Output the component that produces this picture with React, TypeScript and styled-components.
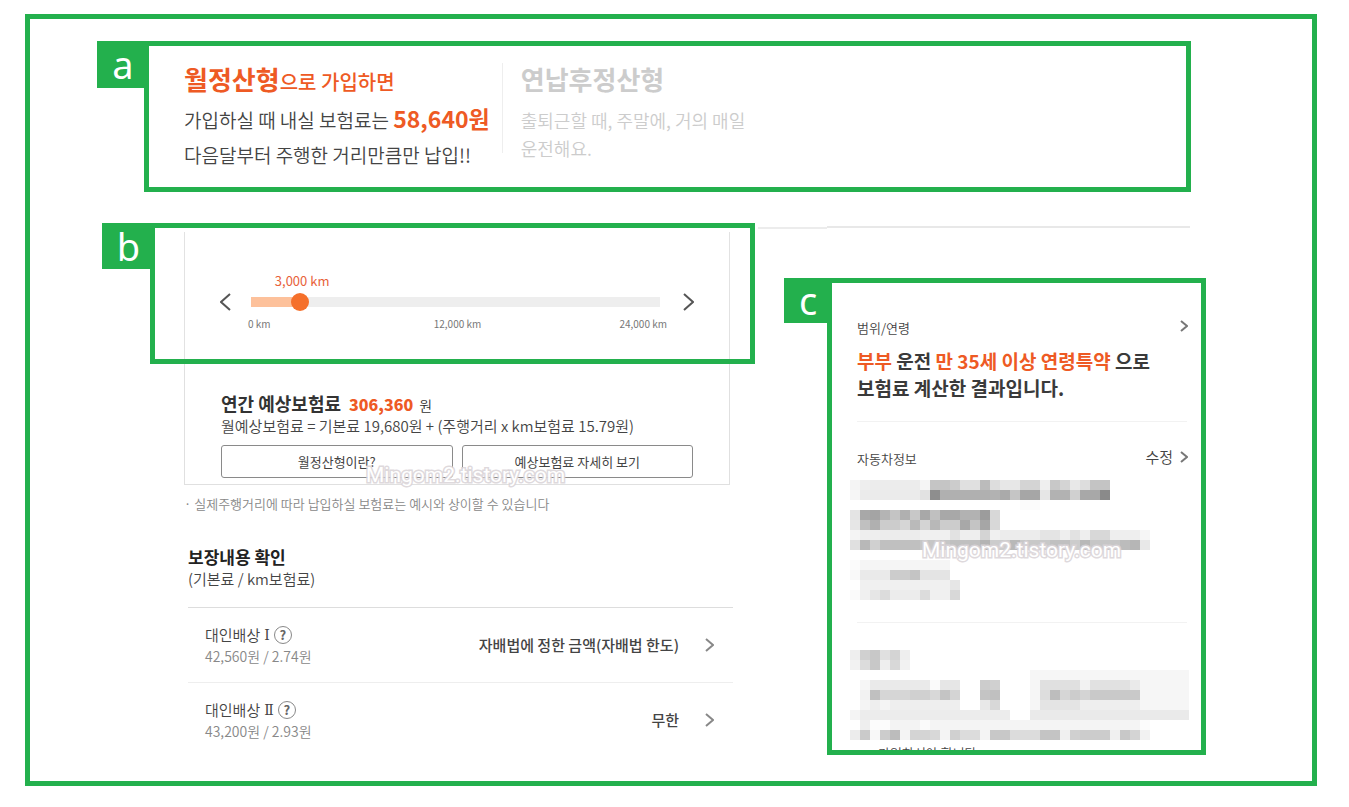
import React, { useState } from 'react';
import styled, { createGlobalStyle } from 'styled-components';

const GREEN = '#23b04d';
const ORANGE = '#ee5a24';

const GlobalStyle = createGlobalStyle`
  *, *::before, *::after { box-sizing: border-box; }
  body {
    margin: 0;
    background: #fff;
    color: #444;
    font-family: "Noto Sans CJK KR", "Noto Sans", sans-serif;
  }
  h2, h3, p, ul { margin: 0; padding: 0; }
  button { font-family: inherit; color: inherit; cursor: pointer; }
`;

const Page = styled.main`
  padding: 14px 32px 21px 25px;
`;

const Frame = styled.div`
  border: 5px solid ${GREEN};
  padding: 22px 0 25px;
`;

const Callout = styled.section`
  display: flex;
  align-items: flex-start;
`;

const Tag = styled.span<{ $width: number; $height: number }>`
  flex: none;
  width: ${p => p.$width}px;
  height: ${p => p.$height}px;
  margin-right: -5px;
  background: ${GREEN};
  color: #fff;
  font: 400 38px/${p => p.$height}px "Noto Sans", sans-serif;
  text-align: center;
`;

const Box = styled.div`
  flex: 1;
  min-width: 0;
  border: 5px solid ${GREEN};
`;

/* plan comparison */

const PlanCallout = styled(Callout)`
  margin: 0 121px 31px 67px;
`;

const Plans = styled(Box)`
  display: flex;
  padding: 15px 0 17px 35px;
`;

const Plan = styled.div`
  flex: none;
  min-width: 304px;
  white-space: nowrap;
`;

const PlanTitle = styled.h2<{ $muted?: boolean }>`
  font-size: 26px;
  font-weight: 700;
  line-height: 36px;
  color: ${p => (p.$muted ? '#ccc' : ORANGE)};
`;

const PlanTitleRest = styled.span`
  font-size: 20px;
  font-weight: 500;
`;

const PlanPrice = styled.p`
  font-size: 19px;
  font-weight: 350;
  line-height: 40px;
`;

const Price = styled.strong`
  font-size: 23px;
  font-weight: 700;
  line-height: 26px;
  color: ${ORANGE};
`;

const PlanNote = styled.p`
  font-size: 19px;
  font-weight: 350;
  line-height: 30px;
`;

const PlanDivider = styled.div`
  flex: none;
  width: 1px;
  height: 90px;
  margin: 2px 18px 0 12px;
  background: #eee;
`;

const PlanSummary = styled.p`
  margin-top: 9px;
  font-size: 18px;
  font-weight: 350;
  line-height: 28px;
  color: #ccc;
`;

/* two-column body */

const Columns = styled.div`
  display: grid;
  grid-template-columns: minmax(0, 653fr) minmax(0, 448fr);
  column-gap: 3px;
  margin: 0 106px 0 72px;
`;

const SliderPane = styled.div`
  display: flex;
  align-items: flex-start;
  height: 127px;
  margin: 4px 20px 0 29px;
  padding: 39px 35px 0;
  border: solid #e2e2e2;
  border-width: 0 1px;
`;

const StepButton = styled.button`
  display: flex;
  flex: none;
  margin-top: 22px;
  padding: 0;
  border: 0;
  background: none;
`;

const SliderBody = styled.div`
  flex: 1;
  min-width: 0;
  margin: 0 23px 0 20px;
`;

const SliderValue = styled.output`
  display: block;
  width: 60px;
  margin-left: -30px;
  position: relative;
  font-size: 13px;
  line-height: 20px;
  text-align: center;
  white-space: nowrap;
  color: #e8623a;
`;

const Range = styled.input<{ $ratio: number }>`
  appearance: none;
  display: block;
  width: calc(100% + 18px);
  height: 20px;
  margin: 1px -9px 0;
  background: none;

  &::-webkit-slider-runnable-track {
    height: 10px;
    margin: 0 9px;
    background: linear-gradient(to right, #fdc19b ${p => p.$ratio * 100}%, #eee 0);
  }
  &::-webkit-slider-thumb {
    appearance: none;
    width: 18px;
    height: 18px;
    margin: -4px -9px 0;
    border-radius: 50%;
    background: #f5702b;
  }
`;

const Scale = styled.div`
  display: grid;
  grid-template-columns: 1fr auto 1fr;
  margin: 4px -7px 0 -3px;
  font-size: 10px;
  line-height: 16px;
  color: #777;

  span:last-child { text-align: right; }
`;

const Estimate = styled.section`
  position: relative;
  margin: 0 25px 0 82px;
  padding: 28px 36px 6px;
  border: solid #e0e0e0;
  border-width: 0 1px 1px;
`;

const EstimateTotal = styled.h3`
  font-size: 18px;
  font-weight: 700;
  line-height: 23px;
  color: #333;

  strong { margin: 0 2px 0 4px; font-size: 16px; color: ${ORANGE}; }
  span { font-size: 14px; font-weight: 350; }
`;

const Formula = styled.p`
  font-size: 15px;
  font-weight: 350;
  line-height: 18px;
  white-space: nowrap;
`;

const ButtonRow = styled.div`
  display: grid;
  grid-template-columns: 1fr 1fr;
  gap: 9px;
  margin-top: 10px;
`;

const OutlineButton = styled.button`
  height: 33px;
  padding: 0;
  border: 1px solid #8a8a8a;
  border-radius: 3px;
  background: #fff;
  font-size: 13px;
`;

const Watermark = styled.span<{ $left: number; $top: number }>`
  position: absolute;
  left: ${p => p.$left}px;
  top: ${p => p.$top}px;
  font: 400 21px/24px Roboto, sans-serif;
  color: #fff;
  -webkit-text-stroke: 3px rgba(218, 212, 216, 0.9);
  paint-order: stroke fill;
  pointer-events: none;
`;

const Notice = styled.p`
  display: flex;
  gap: 3px;
  margin: 9px 0 0 82px;
  font-size: 13px;
  font-weight: 350;
  line-height: 20px;
  color: #888;
  white-space: nowrap;
`;

const Coverage = styled.section`
  margin: 33px 22px 0 86px;
`;

const CoverageTitle = styled.h3`
  font-size: 17px;
  font-weight: 700;
  line-height: 20px;
  color: #222;
`;

const CoverageUnit = styled.p`
  font-size: 15px;
  font-weight: 350;
  line-height: 24px;
`;

const CoverageList = styled.ul`
  margin-top: 16px;
  border-top: 1px solid #ddd;
  list-style: none;
`;

const CoverageRow = styled.li`
  display: flex;
  align-items: center;
  height: 74px;
  padding: 0 19px 0 17px;

  & + & { border-top: 1px solid #eee; }
`;

const CoverageInfo = styled.div`
  flex: 1;
  min-width: 0;
`;

const CoverageName = styled.div`
  display: flex;
  align-items: center;
  font-size: 15px;
  font-weight: 350;
  line-height: 22px;
`;

const Numeral = styled.span`
  margin: 0 4px;
  font: 14px/22px "DejaVu Serif", serif;
`;

const HelpButton = styled.button`
  width: 18px;
  height: 18px;
  padding: 0;
  border: 1px solid #888;
  border-radius: 50%;
  background: none;
  font-size: 13px;
  font-weight: 700;
  line-height: 14px;
  color: #666;
`;

const CoveragePrice = styled.div`
  font-size: 14px;
  font-weight: 350;
  line-height: 20px;
  color: #888;
`;

const CoverageValue = styled.strong`
  margin-right: 26px;
  font-size: 15px;
  font-weight: 500;
  line-height: 20px;
`;

/* right column */

const Aside = styled.div`
  padding-left: 26px;
`;

const TopRule = styled.div`
  display: flex;
  height: 55px;
  margin: 0 16px 0 -26px;
  padding-top: 3px;
`;

const RuleShort = styled.div`
  width: 69px;
  height: 2px;
  margin-top: 1px;
  background: #ececec;
`;

const RuleLong = styled.div`
  flex: 1;
  height: 2px;
  background: #e8e8e8;
`;

const Summary = styled(Box)`
  position: relative;
  padding: 34px 0 0 25px;
`;

const SummaryHead = styled.div`
  display: flex;
  justify-content: space-between;
  align-items: center;
  height: 20px;
  margin-right: 13px;
  font-size: 13px;
  font-weight: 350;
`;

const MoreButton = styled.button`
  display: flex;
  align-items: center;
  gap: 7px;
  padding: 0 0 3px;
  border: 0;
  background: none;
  font-size: 15px;
  font-weight: 350;
  line-height: 20px;
`;

const SummaryText = styled.p`
  margin-top: 10px;
  font-size: 19px;
  font-weight: 700;
  line-height: 27px;
  white-space: nowrap;
  color: #3a3a3a;

  em { font-style: normal; color: ${ORANGE}; }
`;

const MosaicSvg = styled.svg`
  display: block;
  margin-left: -7px;

  ${SummaryHead} + & { margin-top: 12px; }
`;

const SummaryRule = styled.div`
  height: 1px;
  margin: 20px 14px 26px 0;
  background: #f2f2f2;

  ${MosaicSvg} + & { margin-top: 22px; margin-bottom: 27px; }
`;

const CutText = styled.p`
  height: 5px;
  margin: 5px 0 0 21px;
  overflow: hidden;
  font-size: 13px;
  font-weight: 350;
  line-height: 16px;
`;

type ChevronProps = { dir?: 'left' | 'right'; w: number; h: number; color: string; stroke?: number };

function Chevron({ dir = 'right', w, h, color, stroke = 2 }: ChevronProps) {
  const near = dir === 'right' ? 1 : w - 1;
  const far = dir === 'right' ? w - 1 : 1;
  return (
    <svg width={w} height={h} viewBox={`0 0 ${w} ${h}`} aria-hidden="true">
      <path d={`M${near} 1L${far} ${h / 2}L${near} ${h - 1}`} fill="none" stroke={color} strokeWidth={stroke} />
    </svg>
  );
}

/* Each token is a run of 10px cells: a count, then the two-digit grey level. */
const CAR_ROWS = [
  '1f4 1ee 5ec 1f5 2c5 1cc 2e0 1bb 1dd 2e7 2d4 1ef 1c8 1d4 1e8 1dd 2c4',
  '1f6 6eb 1e2 18e 5b0 1b2 1aa 1c5 2a6 1e6 2b2 1d0 2a8 18a',
  '17ff 2fb',
  '1e4 1a8 1a4 1b4 1c4 1b0 1c8 1a8 1c0 2a8 2b2 19c 1d8',
  '1e6 1c0 1b0 2cc 1d6 1ba 1d4 1b8 2cc 1a8 1c4 1a6 1d8',
  '1f4 2ee 4ec 3f0 1e2 2ee 1d4 1f0 4ec 2e4 1ee 1e2 1ee 2d8 3ee 1f6',
  '1e0 1b8 1d0 4c0 3c6 3c0 1b4 2cc 1b8 3c8 2c0 1cc 1b8 3c6 1bc 1b6 1e8',
  '30ff',
  '1fb 9f5',
  '1f9 3ea 2cc 1c4 3e4',
  '1ff 9f0 1e6',
  '1fa 1f0 1e6 1dc 3ec 1dc 2f0 1d8',
];

const PLAN_ROWS = [
  '1ee 1d0 1c8 1e0 1d4 1ee',
  '1f2 1dc 1c8 1ee 1d8 1f2',
  '18ff 16f6',
  '1ff 1f6 6ea 1fa 2e6 2ff 1cc 1d0 3ff 1f6 4e0 1f2 4e1 1ea 5f6',
  '1ff 1f2 1c0 3d6 2d0 1d8 1c4 1d4 2ff 1c4 1c0 3ff 1f6 1dd 1bd 1d6 1cc 1d4 5c9 5f6',
  '1ff 1f4 1ee 1f4 7ee 2ff 1e8 1d8 3ff 1f6 4e4 6ee 5f6',
  '1f4 15ec 2ff 16ea',
  '1ff 1ee 2fc 3f3 1fa 21f4 1fc',
  '1ec 1ca 1f8 1cc 1bc 1f4 2d4 1d8 1f4 1d0 2dc 1f4 2c8 3dc 2c4 1f0 1d0 3cc 1f0 1c8 1d4 1f2',
];

function Mosaic({ rows }: { rows: string[] }) {
  const height = rows.length * 10;
  return (
    <MosaicSvg width="339" height={height} viewBox={`0 0 339 ${height}`} shapeRendering="crispEdges" aria-hidden="true">
      {rows.map((row, y) => {
        let x = 0;
        return row.split(' ').map(run => {
          const shade = run.slice(-2);
          const count = Number(run.slice(0, -2));
          const start = x;
          x += count;
          return (
            <rect key={`${y}-${start}`} x={start * 10} y={y * 10} width={count * 10} height="10" fill={`#${shade}${shade}${shade}`} />
          );
        });
      })}
    </MosaicSvg>
  );
}

const COVERAGES = [
  { numeral: 'Ⅰ', price: '42,560원 / 2.74원', value: '자배법에 정한 금액(자배법 한도)' },
  { numeral: 'Ⅱ', price: '43,200원 / 2.93원', value: '무한' },
];

const MAX_KM = 24000;

export default function App() {
  const [km, setKm] = useState(3000);
  const ratio = km / MAX_KM;
  const step = (by: number) => setKm(v => Math.min(MAX_KM, Math.max(0, v + by)));

  return (
    <>
      <GlobalStyle />
      <Page>
        <Frame>
          <PlanCallout>
            <Tag $width={52} $height={47}>a</Tag>
            <Plans>
              <Plan>
                <PlanTitle>월정산형<PlanTitleRest>으로 가입하면</PlanTitleRest></PlanTitle>
                <PlanPrice>가입하실 때 내실 보험료는 <Price>58,640원</Price></PlanPrice>
                <PlanNote>다음달부터 주행한 거리만큼만 납입!!</PlanNote>
              </Plan>
              <PlanDivider />
              <Plan>
                <PlanTitle $muted>연납후정산형</PlanTitle>
                <PlanSummary>출퇴근할 때, 주말에, 거의 매일<br />운전해요.</PlanSummary>
              </Plan>
            </Plans>
          </PlanCallout>

          <Columns>
            <div>
              <Callout>
                <Tag $width={53} $height={46}>b</Tag>
                <Box>
                  <SliderPane>
                    <StepButton type="button" aria-label="거리 줄이기" onClick={() => step(-1000)}>
                      <Chevron dir="left" w={11} h={18} color="#555" />
                    </StepButton>
                    <SliderBody>
                      <SliderValue htmlFor="distance" style={{ left: `${ratio * 100}%` }}>
                        {km.toLocaleString('en-US')} km
                      </SliderValue>
                      <Range
                        id="distance"
                        type="range"
                        aria-label="주행거리"
                        min={0}
                        max={MAX_KM}
                        step={1000}
                        value={km}
                        $ratio={ratio}
                        onChange={e => setKm(Number(e.target.value))}
                      />
                      <Scale>
                        <span>0 km</span>
                        <span>12,000 km</span>
                        <span>24,000 km</span>
                      </Scale>
                    </SliderBody>
                    <StepButton type="button" aria-label="거리 늘리기" onClick={() => step(1000)}>
                      <Chevron w={11} h={18} color="#555" />
                    </StepButton>
                  </SliderPane>
                </Box>
              </Callout>

              <Estimate>
                <EstimateTotal>연간 예상보험료 <strong>306,360</strong> <span>원</span></EstimateTotal>
                <Formula>월예상보험료 = 기본료 19,680원 + (주행거리 x km보험료 15.79원)</Formula>
                <ButtonRow>
                  <OutlineButton type="button">월정산형이란?</OutlineButton>
                  <OutlineButton type="button">예상보험료 자세히 보기</OutlineButton>
                </ButtonRow>
                <Watermark $left={181} $top={99}>Mingom2.tistory.com</Watermark>
              </Estimate>
              <Notice><span>·</span>실제주행거리에 따라 납입하실 보험료는 예시와 상이할 수 있습니다</Notice>

              <Coverage>
                <CoverageTitle>보장내용 확인</CoverageTitle>
                <CoverageUnit>(기본료 / km보험료)</CoverageUnit>
                <CoverageList>
                  {COVERAGES.map(c => (
                    <CoverageRow key={c.numeral}>
                      <CoverageInfo>
                        <CoverageName>
                          대인배상<Numeral>{c.numeral}</Numeral>
                          <HelpButton type="button">?</HelpButton>
                        </CoverageName>
                        <CoveragePrice>{c.price}</CoveragePrice>
                      </CoverageInfo>
                      <CoverageValue>{c.value}</CoverageValue>
                      <Chevron w={9} h={14} color="#888" />
                    </CoverageRow>
                  ))}
                </CoverageList>
              </Coverage>
            </div>

            <Aside>
              <TopRule><RuleShort /><RuleLong /></TopRule>
              <Callout>
                <Tag $width={48} $height={45}>c</Tag>
                <Summary>
                  <SummaryHead>
                    범위/연령
                    <MoreButton type="button" aria-label="범위/연령 보기">
                      <Chevron w={8} h={12} color="#777" />
                    </MoreButton>
                  </SummaryHead>
                  <SummaryText>
                    <em>부부</em> 운전 <em>만 35세 이상 연령특약</em> 으로<br />보험료 계산한 결과입니다.
                  </SummaryText>
                  <SummaryRule />
                  <SummaryHead>
                    자동차정보
                    <MoreButton type="button">
                      수정<Chevron w={8} h={12} color="#777" />
                    </MoreButton>
                  </SummaryHead>
                  <Mosaic rows={CAR_ROWS} />
                  <SummaryRule />
                  <Mosaic rows={PLAN_ROWS} />
                  <CutText>가입하셔야 합니다</CutText>
                  <Watermark $left={90} $top={255}>Mingom2.tistory.com</Watermark>
                </Summary>
              </Callout>
            </Aside>
          </Columns>
        </Frame>
      </Page>
    </>
  );
}
